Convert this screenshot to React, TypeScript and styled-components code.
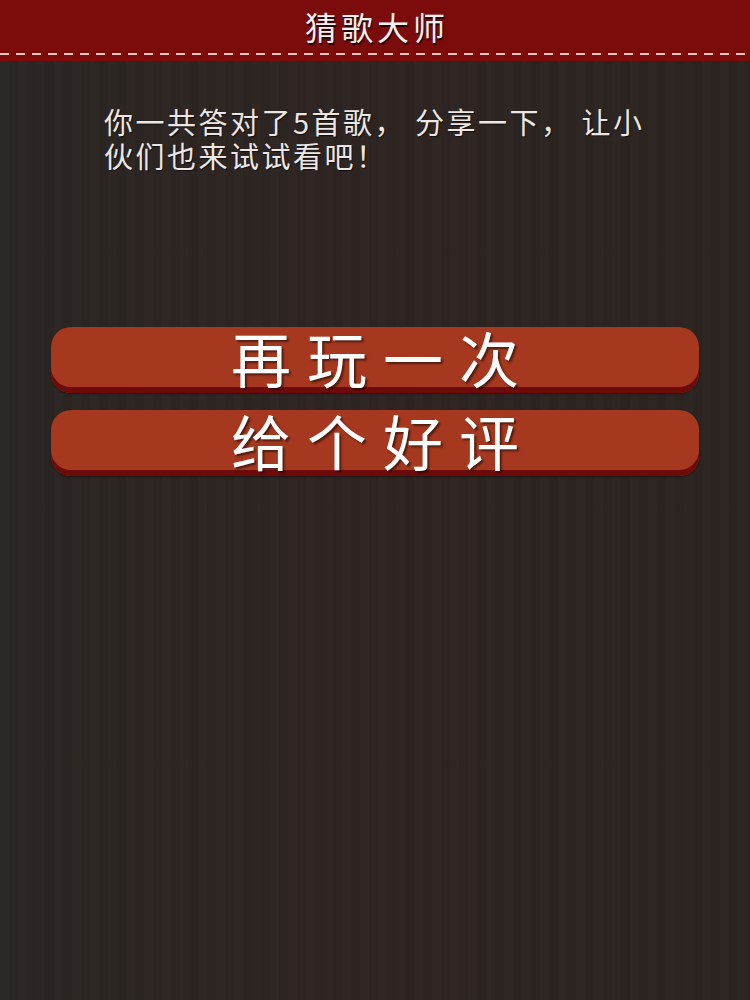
import React from 'react';
import styled, { createGlobalStyle } from 'styled-components';

const GlobalStyle = createGlobalStyle`
  html, body {
    margin: 0;
    padding: 0;
    background: #2b2522;
  }
  * { box-sizing: border-box; }
`;

const FONT = `"Noto Sans CJK SC", "Noto Sans", sans-serif`;

const Page = styled.div`
  width: 750px;
  min-height: 1000px;
  display: flex;
  flex-direction: column;
  font-family: ${FONT};
  background-color: #2c2522;
  background-image:
    repeating-linear-gradient(90deg, rgba(255,255,255,0.008) 0 9px, rgba(0,0,0,0.02) 9px 18px),
    linear-gradient(90deg, #2a2623 0%, #2e2522 40%, #2b2421 100%);
`;

const Header = styled.header`
  height: 61px;
  background: #7c0c0c;
  display: flex;
  flex-direction: column;
  align-items: center;
`;

const HeaderTitle = styled.h1`
  margin: 0;
  padding-left: 4px;
  height: 52px;
  display: flex;
  align-items: center;
  font-size: 32px;
  font-weight: 400;
  color: #f4f0ee;
  letter-spacing: 4px;
  text-shadow: 1px 2px 1px rgba(0,0,0,0.75);
`;

const Stitch = styled.div`
  width: 100%;
  height: 2px;
  margin-top: 1px;
  background-image: repeating-linear-gradient(90deg, #f0c4bc 0 9px, transparent 9px 16px);
`;

const Message = styled.p`
  margin: 43px 95px 0 104px;
  font-size: 29px;
  line-height: 34px;
  letter-spacing: 2.5px;
  color: #ebe7e5;
  text-shadow: 1px 1px 1px rgba(0,0,0,0.6);
`;

const Actions = styled.div`
  margin: 155px 51px 0 51px;
  display: flex;
  flex-direction: column;
  gap: 17px;
`;

const ActionButton = styled.button`
  height: 66px;
  border: none;
  border-radius: 20px;
  padding: 0 0 7px 16px;
  background: #a5381f;
  box-shadow: inset 0 -6px 0 #6d0b0b, 0 1px 2px rgba(0,0,0,0.4);
  color: #ffffff;
  font-family: ${FONT};
  font-size: 60px;
  font-weight: 400;
  letter-spacing: 16px;
  line-height: 1;
  display: flex;
  align-items: center;
  justify-content: center;
  text-shadow: 2px 2px 2px rgba(0,0,0,0.5);
  cursor: pointer;
`;

export default function App() {
  return (
    <>
      <GlobalStyle />
      <Page>
        <Header>
          <HeaderTitle>猜歌大师</HeaderTitle>
          <Stitch />
        </Header>
        <Message>你一共答对了5首歌， 分享一下， 让小伙们也来试试看吧！</Message>
        <Actions>
          <ActionButton>再玩一次</ActionButton>
          <ActionButton>给个好评</ActionButton>
        </Actions>
      </Page>
    </>
  );
}
